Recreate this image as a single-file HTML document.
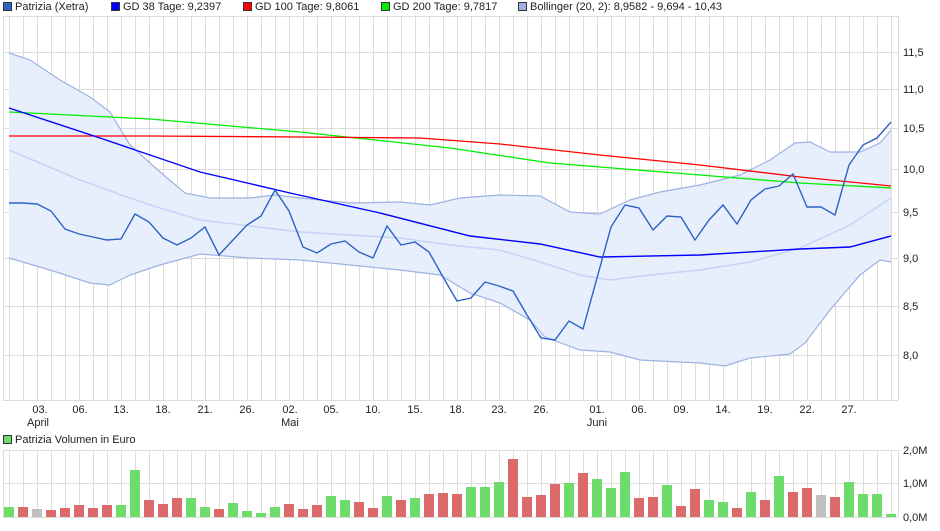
<!DOCTYPE html>
<html><head><meta charset="utf-8"><style>
body{margin:0;background:#fff;width:940px;height:526px;overflow:hidden;font-family:"Liberation Sans",sans-serif;}
svg text{font-family:"Liberation Sans",sans-serif;font-size:11px;fill:#222;}
</style></head><body>
<svg width="940" height="526" xmlns="http://www.w3.org/2000/svg">
<g id="grid" stroke="#dcdcdc" stroke-width="1">
<line x1="3" y1="16.5" x2="898" y2="16.5"/>
<line x1="3" y1="52.5" x2="898" y2="52.5"/>
<line x1="3" y1="89.5" x2="898" y2="89.5"/>
<line x1="3" y1="128.5" x2="898" y2="128.5"/>
<line x1="3" y1="169.5" x2="898" y2="169.5"/>
<line x1="3" y1="212.5" x2="898" y2="212.5"/>
<line x1="3" y1="258.5" x2="898" y2="258.5"/>
<line x1="3" y1="306.5" x2="898" y2="306.5"/>
<line x1="3" y1="355.5" x2="898" y2="355.5"/>
<line x1="3" y1="400.5" x2="898" y2="400.5"/>
<line x1="3" y1="450.5" x2="898" y2="450.5"/>
<line x1="3" y1="483.5" x2="898" y2="483.5"/>
<line x1="3" y1="517.5" x2="898" y2="517.5"/>
<line x1="898.5" y1="16" x2="898.5" y2="400"/>
<line x1="898.5" y1="450" x2="898.5" y2="517"/>
<line x1="3.5" y1="16" x2="3.5" y2="400"/>
<line x1="3.5" y1="450" x2="3.5" y2="517"/>
</g>
<g id="vg" stroke="#dcdcdc"></g>
<polygon fill="#e8effc" points="9,53 30,60 60,80 90,97 110,112 130,145 160,172 185,193 210,198 250,198 275,195 300,198 350,203 400,202 430,205 460,198 500,195 540,196 570,212 600,214 630,200 660,192 700,185 740,175 770,160 795,143 810,142 830,152 860,152 880,143 891,130 891,262 880,260 860,275 830,310 805,343 790,354 750,358 725,366 700,363 640,360 610,352 580,350 545,337 530,320 500,303 470,293 440,275 400,270 350,265 300,260 250,258 200,254 160,265 130,275 110,285 90,283 50,270 9,258"/>
<polyline fill="none" stroke="#9db2e2" stroke-width="1.2" points="9,53 30,60 60,80 90,97 110,112 130,145 160,172 185,193 210,198 250,198 275,195 300,198 350,203 400,202 430,205 460,198 500,195 540,196 570,212 600,214 630,200 660,192 700,185 740,175 770,160 795,143 810,142 830,152 860,152 880,143 891,130"/>
<polyline fill="none" stroke="#9db2e2" stroke-width="1.2" points="9,258 50,270 90,283 110,285 130,275 160,265 200,254 250,258 300,260 350,265 400,270 440,275 470,293 500,303 530,320 545,337 580,350 610,352 640,360 700,363 725,366 750,358 790,354 805,343 830,310 860,275 880,260 891,262"/>
<polyline fill="none" stroke="#c4d4f6" stroke-width="1.5" points="9,150 80,180 150,205 200,220 300,232 400,238 450,245 500,250 550,265 580,275 610,280 650,275 700,270 750,262 800,248 850,225 891,198"/>
<polyline fill="none" stroke="#00ee00" stroke-width="1.3" points="9,112 150,119 300,132 450,148 550,163 700,175 800,183 891,188"/>
<polyline fill="none" stroke="#ff0000" stroke-width="1.3" points="9,136 150,136 300,137 420,138 500,144 600,155 700,165 800,177 891,186"/>
<polyline fill="none" stroke="#0000ff" stroke-width="1.4" points="9,108 100,138 200,172 290,193 380,213 470,236 540,244 600,257 700,255 800,249 850,247 891,236"/>
<polyline fill="none" stroke="#2c62c4" stroke-width="1.4" points="9,203 23,203 37,204 51,211 65,229 79,234 93,237 107,240 121,239 135,214 149,222 163,238 177,245 191,238 205,227 219,255 233,240 247,225 261,216 275,190 289,211 303,247 317,253 331,244 345,241 359,252 373,258 387,226 401,245 415,242 429,252 443,277 457,301 471,298 485,282 499,286 513,291 527,315 541,338 555,340 569,321 583,329 611,227 625,205 639,208 653,230 667,216 681,217 695,240 709,220 723,205 737,224 751,200 765,189 779,186 793,174 807,207 821,207 835,215 849,165 863,145 877,138 891,122"/>
<g id="bars"></g>
<g text-anchor="start">
<text x="903" y="56">11,5</text><text x="903" y="93">11,0</text><text x="903" y="132">10,5</text><text x="903" y="173">10,0</text><text x="903" y="216">9,5</text><text x="903" y="262">9,0</text><text x="903" y="310">8,5</text><text x="903" y="359">8,0</text>
<text x="903" y="454">2,0M</text><text x="903" y="487">1,0M</text><text x="903" y="521">0,0M</text>
</g>
<g text-anchor="middle">
<text x="40" y="413">03.</text><text x="80" y="413">06.</text><text x="121" y="413">13.</text><text x="163" y="413">18.</text><text x="205" y="413">21.</text><text x="247" y="413">26.</text><text x="290" y="413">02.</text><text x="331" y="413">05.</text><text x="373" y="413">10.</text><text x="415" y="413">15.</text><text x="457" y="413">18.</text><text x="499" y="413">23.</text><text x="541" y="413">26.</text><text x="597" y="413">01.</text><text x="639" y="413">06.</text><text x="681" y="413">09.</text><text x="723" y="413">14.</text><text x="765" y="413">19.</text><text x="807" y="413">22.</text><text x="849" y="413">27.</text>
<text x="38" y="426">April</text><text x="290" y="426">Mai</text><text x="597" y="426">Juni</text>
</g>
<g stroke="#333" stroke-width="1">
<rect x="3.5" y="2.5" width="8" height="8" fill="#2c62c4"/>
<rect x="111.5" y="2.5" width="8" height="8" fill="#0000ff"/>
<rect x="243.5" y="2.5" width="8" height="8" fill="#ff0000"/>
<rect x="381.5" y="2.5" width="8" height="8" fill="#00ee00"/>
<rect x="518.5" y="2.5" width="8" height="8" fill="#9db2e2"/>
<rect x="3.5" y="435.5" width="8" height="8" fill="#6cdc6c"/>
</g>
<text x="15" y="10">Patrizia (Xetra)</text>
<text x="123" y="10">GD 38 Tage: 9,2397</text>
<text x="255" y="10">GD 100 Tage: 9,8061</text>
<text x="393" y="10">GD 200 Tage: 9,7817</text>
<text x="530" y="10">Bollinger (20, 2): 8,9582 - 9,694 - 10,43</text>
<text x="15" y="443">Patrizia Volumen in Euro</text>
</svg>
<script>
(function(){
var ns="http://www.w3.org/2000/svg";
var vg=document.getElementById("vg");
for(var i=0;i<64;i++){var x=9+14*i+0.5;
 [[16,400],[450,517]].forEach(function(r){var l=document.createElementNS(ns,"line");l.setAttribute("x1",x);l.setAttribute("x2",x);l.setAttribute("y1",r[0]);l.setAttribute("y2",r[1]);vg.appendChild(l);});}
var h=[10,10,8,7,9,12,9,12,12,47,17,13,19,19,10,8,14,6,4,10,13,8,12,21,17,15,9,21,17,19,23,24,23,30,30,35,58,20,22,33,34,44,38,29,45,19,20,32,11,28,17,15,9,25,17,41,25,29,22,20,35,23,23,3];
var c="ggyrrrrrgg rrrgg rgggg rrrggr grgrrrg g gr rrrgrggg rrgrrgg rg rgrryrgggg".replace(/ /g,"");
var cols=["g","r","y","r","r","r","r","r","g","g","r","r","r","g","g","r","g","g","g","g","r","r","r","g","g","r","r","g","r","g","r","r","r","g","g","g","r","r","r","r","g","r","g","g","g","r","r","g","r","r","g","g","r","g","r","g","r","r","y","r","g","g","g","g"];
var map={g:"#6cdc6c",r:"#dc6a6a",y:"#c0c0c0"};
var b=document.getElementById("bars");
for(var i=0;i<64;i++){var r=document.createElementNS(ns,"rect");r.setAttribute("x",9+14*i-5);r.setAttribute("width",10);r.setAttribute("y",517-h[i]);r.setAttribute("height",h[i]);r.setAttribute("fill",map[cols[i]]);b.appendChild(r);}
})();
</script>
</body></html>
